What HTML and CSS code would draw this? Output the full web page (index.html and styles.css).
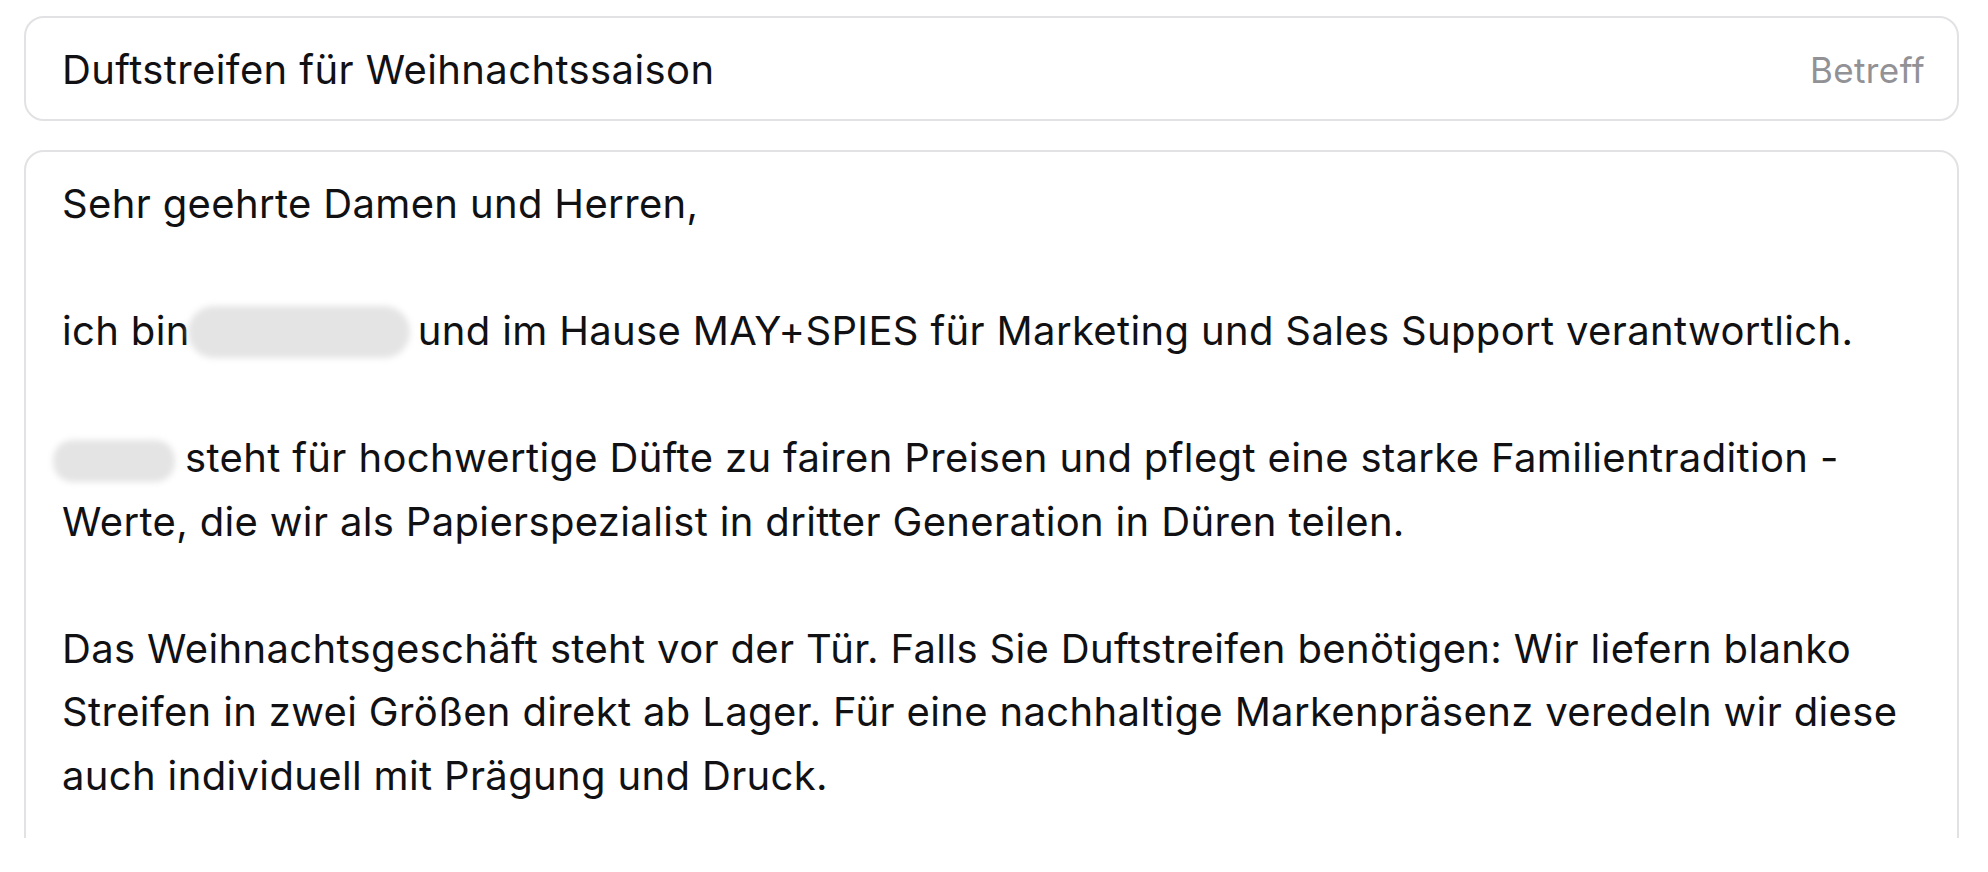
FILE: index.html
```html
<!DOCTYPE html>
<html lang="de">
<head>
<meta charset="utf-8">
<title>Duftstreifen für Weihnachtssaison</title>
<link rel="stylesheet" href="styles.css">
</head>
<body>
<div class="compose">
  <div class="subject-field">
    <span class="subject-text">Duftstreifen für Weihnachtssaison</span>
    <span class="subject-label">Betreff</span>
  </div>
  <div class="body-field">
    <p class="para">Sehr geehrte Damen und Herren,</p>
    <p class="para">ich bin<span class="redact redact-name"></span>und im Hause MAY+SPIES für Marketing und Sales Support verantwortlich.</p>
    <p class="para"><span class="redact redact-brand"></span>steht für hochwertige Düfte zu fairen Preisen und pflegt eine starke Familientradition -<br>Werte, die wir als Papierspezialist in dritter Generation in Düren teilen.</p>
    <p class="para">Das Weihnachtsgeschäft steht vor der Tür. Falls Sie Duftstreifen benötigen: Wir liefern blanko<br>Streifen in zwei Größen direkt ab Lager. Für eine nachhaltige Markenpräsenz veredeln wir diese<br>auch individuell mit Prägung und Druck.</p>
  </div>
</div>
</body>
</html>
```

FILE: styles.css
```css
html, body {
  margin: 0;
  padding: 0;
  background: #ffffff;
}

body {
  font-family: Inter, "Noto Sans", "Liberation Sans", sans-serif;
  color: #111113;
}

.compose {
  height: 838px;
  box-sizing: border-box;
  padding: 16px 29px 0 24px;
  display: flex;
  flex-direction: column;
  gap: 29px;
  overflow: hidden;
}

.subject-field {
  flex: none;
  height: 105px;
  box-sizing: border-box;
  border: 2px solid #e2e2e5;
  border-radius: 20px;
  display: flex;
  align-items: center;
  justify-content: space-between;
  padding: 2px 32px 0 36px;
}

.subject-text {
  font-size: 40px;
  letter-spacing: 0.4px;
}

.subject-label {
  font-size: 35px;
  color: #919196;
  letter-spacing: 0.4px;
}

.body-field {
  flex: none;
  height: 900px;
  box-sizing: border-box;
  border: 2px solid #e2e2e5;
  border-radius: 20px;
  padding: 20px 36px 0 36px;
}

.para {
  margin: 0 0 63.5px 0;
  font-size: 40px;
  line-height: 63.5px;
  letter-spacing: 0.35px;
}

.redact {
  display: inline-block;
  vertical-align: middle;
  background: #e4e4e4;
  filter: blur(3px);
}

.redact-name {
  width: 222px;
  height: 52px;
  border-radius: 26px;
  margin: 0 8px 0 -2px;
  position: relative;
  top: -2px;
}

.redact-brand {
  width: 122px;
  height: 42px;
  border-radius: 20px;
  margin: 0 10px 0 -9px;
}
```
